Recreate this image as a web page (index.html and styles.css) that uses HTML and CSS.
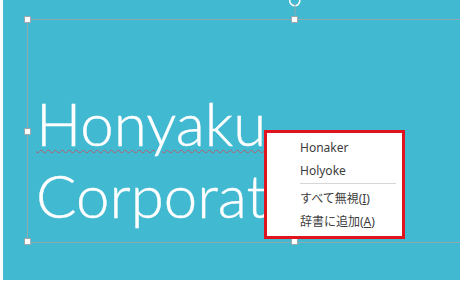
FILE: index.html
```html
<!DOCTYPE html>
<html lang="ja">
<head>
    <meta charset="UTF-8">
    <title>Honyaku Corporation</title>
    <link rel="stylesheet" href="styles.css">
</head>
<body>
    <div class="slide">
        <div class="frame">
            <p class="title"><span class="misspelled">Honyaku</span><br>Corporation</p>

            <!-- selection handles -->
            <span class="handle h-tl"></span>
            <span class="handle h-tm"></span>
            <span class="handle h-ml"></span>
            <span class="handle h-bl"></span>
            <span class="handle h-bm"></span>
            <svg class="rotate" width="20" height="22" viewBox="0 0 20 22">
                <path d="M13.5 2.5 A5 5 0 1 1 6.5 2" fill="none" stroke="#fff" stroke-width="1.5"/>
                <line x1="10" y1="8" x2="10" y2="20" stroke="#8fa9b1" stroke-width="1"/>
            </svg>
        </div>
    </div>

    <div class="menu">
        <ul class="menu-list">
            <li class="item">Honaker</li>
            <li class="item">Holyoke</li>
            <li class="sep"></li>
            <li class="item">すべて無視(<u>I</u>)</li>
            <li class="item">辞書に追加(<u>A</u>)</li>
        </ul>
    </div>
</body>
</html>
```

FILE: styles.css
```css
body {
    margin: 0;
    background-color: #fff;
    font-family: "Noto Sans", "Noto Sans CJK JP", sans-serif;
}

.slide {
    width: 457px;
    height: 280px;
    margin-left: 3px;
    background-color: #41b9d1;
    overflow: hidden;
    position: relative;
}

.frame {
    position: relative;
    margin-left: 24px;
    margin-top: 19px;
    width: 500px;
    height: 222px;
    border: 1px solid #8fa9b1;
    box-sizing: content-box;
}

.title {
    margin: 0;
    padding: 67px 0 0 8px;
    font-family: "Lato", "Open Sans", sans-serif;
    font-weight: 300;
    font-size: 60px;
    line-height: 72px;
    color: #fff;
    white-space: nowrap;
    -webkit-text-stroke: 0.4px #fff;
}

.misspelled {
    text-decoration: underline wavy #b0606e;
    text-decoration-thickness: 1px;
    text-underline-offset: 3px;
}

.handle {
    position: absolute;
    width: 5px;
    height: 5px;
    background-color: #fff;
    border: 1px solid #9aa9ae;
}

.h-tl { left: -4px; top: -4px; }
.h-tm { left: 263px; top: -4px; }
.h-ml { left: -4px; top: 108px; }
.h-bl { left: -4px; top: 218px; }
.h-bm { left: 263px; top: 218px; }

.rotate {
    position: absolute;
    left: 257px;
    top: -25px;
}

.menu {
    position: absolute;
    left: 264px;
    top: 130px;
    width: 135px;
    height: 103px;
    border: 3px solid #e0141e;
    background-color: #fff;
}

.menu-list {
    list-style: none;
    margin: 0;
    padding: 3px 6px 0 33px;
}

.item {
    height: 23px;
    line-height: 23px;
    font-size: 12px;
    color: #3c3c3c;
}

.sep {
    height: 1px;
    margin: 1px 0 3px;
    background-color: #d7d7d7;
}
```
